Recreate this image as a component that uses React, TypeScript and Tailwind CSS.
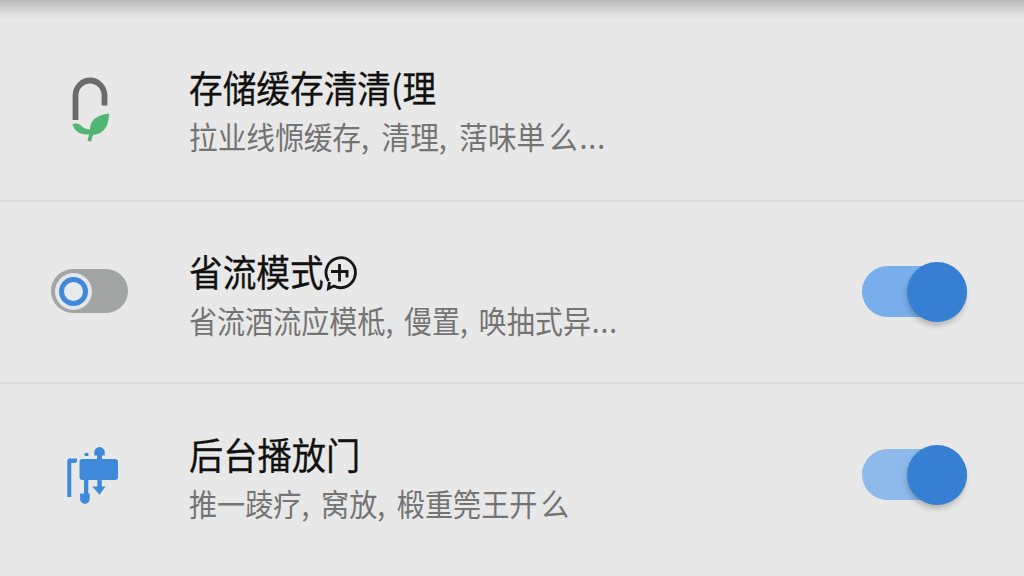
import type { ReactNode } from 'react'

interface SettingRowProps {
  icon: ReactNode
  title: string
  titleClass?: string
  titleIcon?: ReactNode
  summary: ReactNode
  summaryClass: string
  trackClass?: string
  className: string
}

function StorageIcon() {
  return (
    <svg width="90" height="100" viewBox="0 0 90 100" className="block" fill="none">
      <path d="M25.5 60V35.5a14.5 15 0 0 1 29 0V45.5" stroke="#6b6b6b" strokeWidth="5.8" />
      <path
        d="M59 53.5C47 55 40 60 40 69.5C37 69.5 33 68 31 65.5C28 63 25 63.5 22.5 64C24 71 30 75 39 74.5L37.5 81L41 81.5L43 75C54 74 59 66 59 53.5Z"
        fill="#51b573"
      />
    </svg>
  )
}

function DataSaverIcon() {
  return (
    <div className="flex h-11 w-[77px] items-center rounded-full bg-[#a3a5a4] pl-1">
      <div className="flex size-[37px] items-center justify-center rounded-full bg-[#e3e7ec]">
        <div className="size-[29px] rounded-full border-[5px] border-[#4288d8] bg-[#e7e9eb]" />
      </div>
    </div>
  )
}

function BackgroundPlayIcon() {
  return (
    <svg width="90" height="90" viewBox="0 0 90 90" className="block" fill="#3f89da">
      <path d="M17.3 31a2.5 2.5 0 0 1 2.5-2.5H27V31a2 2 0 0 1-2 2h-3.7V67h-4z" />
      <rect x="34.5" y="23" width="4" height="3" rx="0.8" />
      <rect x="29.5" y="29" width="38.5" height="21" rx="3" />
      <path d="M47 30v-4.5h-2.7V22.300a5.200 5.200 0 1 1 10.400 0V25.5H52V30z" />
      <path d="M34 49h4.3v14.5h1.4v4.5a4.9 4.9 0 1 1-9.6 0v-4.5H34z" />
      <path d="M47.3 49h4.5v7.5h3.7l-6 8.3-7.3-8.3h5.1z" />
    </svg>
  )
}

function BubblePlusIcon() {
  return (
    <svg width="34" height="38" viewBox="0 0 34 38" fill="none" stroke="#151515">
      <path d="M5.5 27A14.7 15 0 1 1 11 32L5.5 34.5L6.5 28" strokeWidth="2.9" />
      <path d="M8 17.5h17.5M16.5 10v17.5M24 17.5v6" strokeWidth="2.8" />
    </svg>
  )
}

function Toggle({ trackClass }: { trackClass: string }) {
  return (
    <div className={`mr-[57px] flex h-[51px] w-[105px] items-center justify-end rounded-full ${trackClass}`}>
      <div className="size-[60px] shrink-0 rounded-full bg-[#367fd2] shadow-[-1px_4px_5px_rgba(60,70,70,0.28)]" />
    </div>
  )
}

function SettingRow({
  icon,
  title,
  titleClass = 'scale-x-[0.91]',
  titleIcon,
  summary,
  summaryClass,
  trackClass,
  className,
}: SettingRowProps) {
  return (
    <div className={`flex shrink-0 ${className}`}>
      <div className="flex w-[180px] shrink-0 justify-center">{icon}</div>
      <div className="flex-1 pl-[9px]">
        <div className="-mt-[2px] flex h-12 items-center whitespace-nowrap text-[#111]">
          <span className={`origin-left text-[37px] leading-12 [-webkit-text-stroke:0.3px_#111] ${titleClass}`}>
            {title}
          </span>
          {titleIcon}
        </div>
        <p className={`mt-px h-12 origin-left whitespace-nowrap text-[31px] leading-12 text-[#747474] ${summaryClass}`}>
          {summary}
        </p>
      </div>
      {trackClass && (
        <div className="pt-[17px]">
          <Toggle trackClass={trackClass} />
        </div>
      )}
    </div>
  )
}

export default function App() {
  return (
    <div
      lang="zh-CN"
      className="flex h-[576px] w-[1024px] flex-col overflow-hidden bg-[#e8e8e8] bg-[linear-gradient(#b9b9b9,#c8c8c8_6px,#dedede_13px,#e8e8e8_19px)] font-['Noto_Sans_CJK_SC',sans-serif]"
    >
      <SettingRow
        className="h-[202px] border-b-2 border-[#dcdcdc] pt-[65px]"
        icon={<div className="-mt-[5px] ml-[10px]"><StorageIcon /></div>}
        title="存储缓存清清(理"
        summary={
          <>
            拉业线㥳缓存, 清理, 萿味単<span className="ml-1">么</span>
            <span className="ml-0.5 tracking-[1px]">...</span>
          </>
        }
        summaryClass="scale-x-[0.925] [word-spacing:6.5px]"
      />
      <SettingRow
        className="h-[182px] border-b-2 border-[#dcdcdc] pt-[47px]"
        icon={<div className="mr-px pt-5"><DataSaverIcon /></div>}
        title="省流模式"
        titleIcon={<div className="-ml-[14px] mt-[3px]"><BubblePlusIcon /></div>}
        summary={
          <>
            省流酒流应模柢, 僈置, 唤抽式异<span className="ml-px tracking-[1px]">...</span>
          </>
        }
        summaryClass="scale-x-[0.905] [word-spacing:5px]"
        trackClass="bg-[#79aeec]"
      />
      <SettingRow
        className="h-48 pt-12"
        icon={<div className="-mt-[2px] ml-[10px]"><BackgroundPlayIcon /></div>}
        title="后台播放门"
        titleClass="scale-x-[0.925]"
        summary={
          <>
            推一踜疗, 窝放, 椴重筦王开<span className="ml-1">么</span>
          </>
        }
        summaryClass="scale-x-[0.907] [word-spacing:6px]"
        trackClass="bg-[#8dbaeb]"
      />
    </div>
  )
}
